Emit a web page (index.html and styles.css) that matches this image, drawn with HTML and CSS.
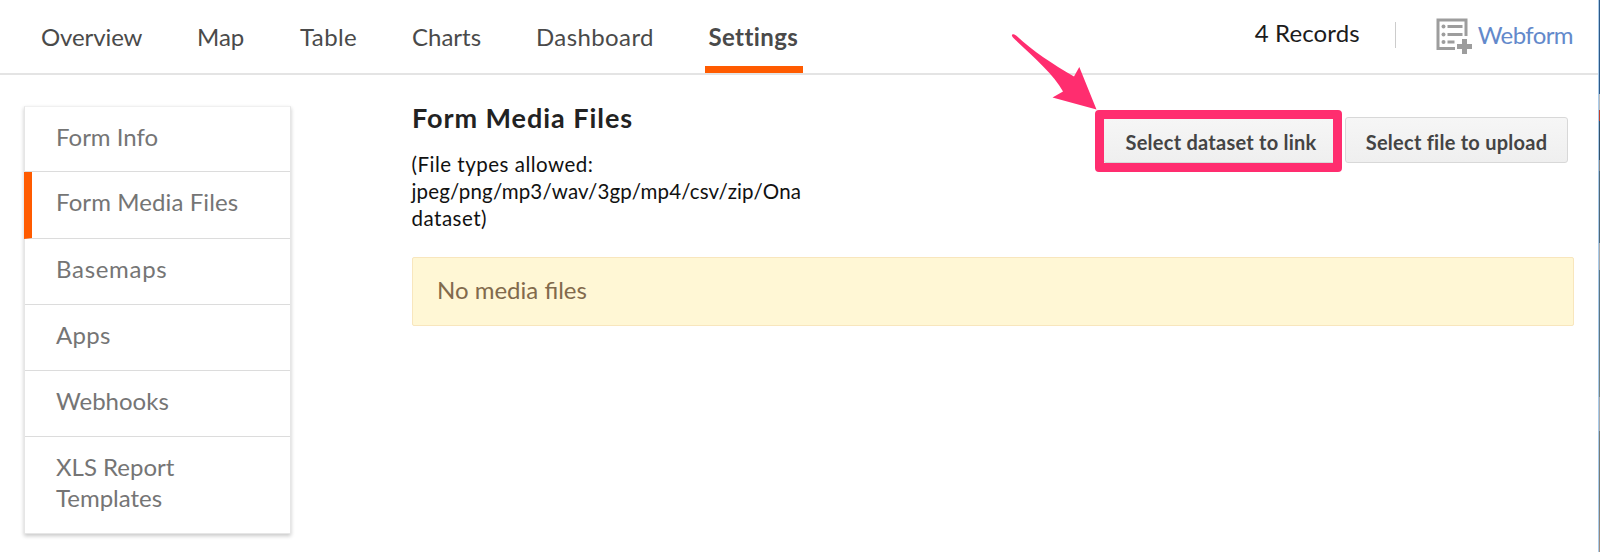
FILE: index.html
```
<!DOCTYPE html>
<html lang="en">
<head>
<meta charset="utf-8">
<title>Form Media Files</title>
<link rel="stylesheet" href="styles.css">
</head>
<body>
<div class="page">
  <header class="topbar">
    <nav class="tabs">
      <a class="tab tab-overview">Overview</a>
      <a class="tab tab-map">Map</a>
      <a class="tab tab-table">Table</a>
      <a class="tab tab-charts">Charts</a>
      <a class="tab tab-dashboard">Dashboard</a>
      <a class="tab tab-settings active">Settings</a>
    </nav>
    <div class="meta">
      <span class="records">4 Records</span>
      <span class="divider"></span>
      <a class="webform">
        <svg class="form-icon" width="36" height="36" viewBox="0 0 36 36">
          <path d="M30 18V2H2v28.500h17" fill="none" stroke="#9d9d9d" stroke-width="3"/>
          <g fill="#9d9d9d">
            <circle cx="7.500" cy="8.500" r="2"/><circle cx="7.500" cy="16.500" r="2"/><circle cx="7.500" cy="24" r="2"/>
            <path d="M11.500 7h15v3h-15zM11.500 15h15v3h-15zM11.500 22.500h7v3h-7z"/>
            <path d="M26 21h5v5h5v5h-5v5h-5v-5h-5v-5h5z"/>
          </g>
        </svg>
        <span class="webform-label">Webform</span>
      </a>
    </div>
  </header>
  <div class="body">
    <aside class="sidebar">
      <a class="item">Form Info</a>
      <a class="item selected">Form Media Files</a>
      <a class="item item-basemaps">Basemaps</a>
      <a class="item item-apps">Apps</a>
      <a class="item">Webhooks</a>
      <a class="item last">XLS Report Templates</a>
    </aside>
    <main class="content">
      <div class="head">
        <div class="intro">
          <h1>Form Media Files</h1>
          <p><span class="hint-lead">(File types allowed:</span> <span class="hint-types">jpeg/png/mp3/wav/3gp/mp4/csv/zip/Ona</span> <span class="hint-end">dataset)</span></p>
        </div>
        <div class="actions">
          <button class="btn btn-link">Select dataset to link</button>
          <button class="btn">Select file to upload</button>
          <span class="highlight"></span>
          <svg class="arrow" width="90" height="80" viewBox="0 0 90 80">
            <path d="M3.300 3.400C5 2.600 6.500 3.800 8 5.300C24 20 43 33 65 45.500L70.300 36L87.500 78.500L43.500 66.500L54 60.500C45 43 24 26 4 6.500C2.800 5.300 2.500 4 3.300 3.400Z" fill="#ff2d6f"/>
          </svg>
        </div>
      </div>
      <div class="notice">No media files</div>
    </main>
  </div>
  <div class="backdrop"></div>
</div>
</body>
</html>
```
FILE: styles.css
```
* { box-sizing: border-box; }
body { margin: 0; background: #fff; font-family: Lato, "Open Sans", sans-serif; }
.page { position: relative; width: 1600px; height: 552px; overflow: hidden; }

.topbar { display: flex; justify-content: space-between; height: 75px; border-bottom: 2px solid #e4e4e4; }
.tabs { display: flex; padding-left: 41px; }
.tab { height: 73px; padding-top: 22px; font-size: 24px; line-height: 29px; color: #4a4a4a; white-space: nowrap; }
.tab-overview { width: 156px; letter-spacing: -0.1px; }
.tab-map { width: 103px; }
.tab-table { width: 112px; letter-spacing: 0.4px; }
.tab-charts { width: 124px; }
.tab-dashboard { width: 168.500px; letter-spacing: 0.4px; }
.tab-settings { width: 98px; padding-left: 4px; letter-spacing: 0.4px; }
.tab.active { font-weight: 700; border-bottom: 7px solid #ff5b00; }

.meta { display: flex; padding-right: 27px; }
.records { padding-top: 18px; font-size: 24px; line-height: 29px; letter-spacing: 0.1px; color: #1c1c1c; }
.divider { width: 1px; height: 26px; margin: 22px 40px 0 35px; background: #ccc; }
.webform { display: flex; color: #6389cb; }
.form-icon { margin-top: 18px; }
.webform-label { padding: 20px 0 0 6px; font-size: 24px; line-height: 29px; letter-spacing: -0.6px; }

.body { display: flex; gap: 121px; padding: 32px 26px 0 24px; }
.sidebar { width: 267px; height: 428px; margin-top: -1px; border: 1px solid #e6e6e6; border-top-color: #f0f0f0; box-shadow: 0 2px 4px rgba(0, 0, 0, .22); background: #fff; }
.item { display: block; height: 66px; padding: 14px 32px 0 31px; border-bottom: 1px solid #dcdcdc; font-size: 24px; line-height: 31px; color: #757575; }
.item:first-child { height: 65px; }
.item.selected { height: 67px; padding-left: 24px; border-left: 8px solid #ff5b00; margin-left: -1px; letter-spacing: 0.1px; }
.item-basemaps { letter-spacing: 0.7px; }
.item-apps { letter-spacing: 0.3px; }
.item.last { height: auto; border-bottom: 0; }

.content { flex: 1; }
.head { display: flex; justify-content: space-between; height: 150px; }
.intro { width: 400px; }
h1 { margin: -6px 0 0; font-size: 27px; line-height: 34px; letter-spacing: 0.95px; color: #222; }
p { margin: 16px 0 0 -0.500px; font-size: 20.500px; line-height: 27.200px; color: #111; }
.hint-lead { letter-spacing: 0.5px; }
.hint-types { letter-spacing: 0.15px; }
.hint-end { letter-spacing: 0.5px; }
.actions { position: relative; display: flex; gap: 6px; padding: 10px 6px 0 0; }
.btn { width: 223px; height: 46px; padding: 3px 0 0; border: 1.500px solid #d8d8d8; border-radius: 3px; background: linear-gradient(#f6f6f6, #efefef); font: 700 20px Lato, sans-serif; letter-spacing: 0.25px; color: #444; }
.btn-link { width: 236px; }
.highlight { position: absolute; left: -8px; top: 3px; width: 247px; height: 62px; border: 9px solid #ff2d6f; border-radius: 4px; }
.arrow { position: absolute; left: -94px; top: -76px; }

.notice { height: 69px; padding: 17px 24px; border: 1px solid #f8e6bd; border-radius: 2px; background: #fff7d5; font-size: 24px; line-height: 29px; color: #826a4c; }
.backdrop { position: absolute; right: 0; top: 0; width: 2px; height: 100%; border-left: 1px solid #a9cbea; background: linear-gradient(#2e5a88 0 17%, #bbb 17% 20%, #c0402c 20% 22%, #33526b 22% 29%, #888 29% 31%, #4f6878 31% 44%, #aaa 44% 49%, #5c7683 49% 60%, #7b8580 72%, #aaa 72% 78%, #777b76 78% 90%, #a48f80 100%); }
```
